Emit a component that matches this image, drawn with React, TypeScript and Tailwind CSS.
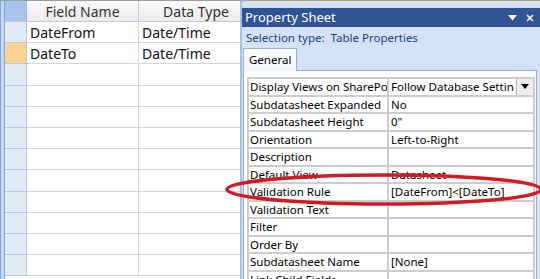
import React from 'react'

const fieldRows = [
  { name: 'DateFrom', type: 'Date/Time' },
  { name: 'DateTo', type: 'Date/Time', current: true },
  ...Array.from({ length: 10 }, () => ({ name: '', type: '' })),
]

const props: [string, string][] = [
  ['Display Views on SharePo', 'Follow Database Settin'],
  ['Subdatasheet Expanded', 'No'],
  ['Subdatasheet Height', '0"'],
  ['Orientation', 'Left-to-Right'],
  ['Description', ''],
  ['Default View', 'Datasheet'],
  ['Validation Rule', '[DateFrom]<[DateTo]'],
  ['Validation Text', ''],
  ['Filter', ''],
  ['Order By', ''],
  ['Subdatasheet Name', '[None]'],
  ['Link Child Fields', ''],
]

function Datasheet() {
  return (
    <div className="w-[240px] h-full shrink-0 flex overflow-hidden bg-white border-t border-[#9c9c9c]">
      {/* blue frame on the left edge */}
      <div className="w-[5px] h-full shrink-0 bg-[#c4d7f0] border-l border-r border-[#88a8d4]" />
      <div className="flex flex-col shrink-0">
        {/* header */}
        <div className="flex h-[21px] shrink-0 border-b border-[#c9c9c9]">
          <div className="w-[22px] bg-[#a9c4ea] border-r border-[#9fb5d6]" />
          <div className="w-[112px] flex items-center justify-center text-[14px] text-[#333] bg-linear-to-b from-[#fbfbfb] to-[#ebebeb] border-r border-[#c9c9c9]">
            Field Name
          </div>
          <div className="w-[114px] flex items-center justify-center text-[14px] text-[#333] bg-linear-to-b from-[#fbfbfb] to-[#ebebeb]">
            Data Type
          </div>
        </div>
        {fieldRows.map((r, i) => (
          <div key={i} className="flex h-[21.2px] shrink-0 text-[14px] text-[#111]">
            <div
              className={`w-[22px] border-r border-b border-[#b7c7de] ${
                r.current ? 'bg-[#fdd38f]' : 'bg-[#e1eaf7]'
              }`}
            />
            <div className="w-[112px] flex items-center pl-[3px] border-r border-b border-[#d6d6d6]">
              {r.name}
            </div>
            <div className="w-[114px] flex items-center pl-[3px] border-b border-[#d6d6d6]">
              {r.type}
            </div>
          </div>
        ))}
      </div>
    </div>
  )
}

function PropertySheet() {
  return (
    <div className="flex-1 h-full flex flex-col bg-[#d3e2f6] border-t border-[#b8a37c] border-l-2 border-l-[#a5c1e8] pt-[7px] overflow-hidden">
      {/* title bar */}
      <div className="h-[19px] shrink-0 flex items-center bg-[#2f5393] text-white pl-[3px] pr-[6px]">
        <span className="text-[13px] leading-none">Property Sheet</span>
        <div className="ml-auto flex items-center gap-[9px]">
          <svg width="9" height="6" viewBox="0 0 9 6">
            <path d="M0 0 H9 L4.5 5.5 Z" fill="white" />
          </svg>
          <svg width="8" height="8" viewBox="0 0 8 8">
            <path d="M1 1 L7 7 M7 1 L1 7" stroke="white" strokeWidth="1.6" />
          </svg>
        </div>
      </div>
      {/* selection type */}
      <div className="h-[21px] shrink-0 flex items-center pl-[4px] text-[11.5px] text-[#1f3f7a]">
        Selection type:&nbsp; Table Properties
      </div>
      {/* tab */}
      <div className="flex shrink-0 pl-[1px]">
        <div className="w-[54px] h-[23px] flex items-center pl-[5px] text-[11.5px] text-black bg-linear-to-b from-white to-[#f1f5fb] border border-b-0 border-[#8db0de] relative z-10 -mb-px">
          General
        </div>
      </div>
      {/* content */}
      <div className="flex-1 ml-[1px] mr-[3px] bg-white border border-[#8db0de] pt-[6px] pl-[3px] pr-[1px]">
        <div className="border-l-2 border-t-2 border-r-2 border-[#cdcdcd] text-[11.5px] text-black">
          {props.map(([label, value], i) => (
            <div key={i} className="flex h-[17.5px] border-b-2 border-[#cdcdcd]">
              <div className="w-[140px] shrink-0 flex items-center pl-[1px] border-r-2 border-[#cdcdcd] whitespace-nowrap overflow-hidden">
                {label}
              </div>
              <div className="flex-1 flex items-center pl-[2px] whitespace-nowrap overflow-hidden">
                <span className="flex-1 overflow-hidden">{value}</span>
                {i === 0 && (
                  <div className="w-[17px] h-full shrink-0 flex items-center justify-center bg-[#eeeeee] border-l border-[#b5b5b5]">
                    <svg width="8" height="5" viewBox="0 0 8 5">
                      <path d="M0 0 H8 L4 5 Z" fill="black" />
                    </svg>
                  </div>
                )}
              </div>
            </div>
          ))}
        </div>
      </div>
    </div>
  )
}

export default function App() {
  return (
    <div className="relative w-[540px] h-[279px] overflow-hidden flex bg-white font-['Noto_Sans',sans-serif]">
      <Datasheet />
      <PropertySheet />
      {/* red hand-drawn ellipse */}
      <svg className="absolute inset-0 pointer-events-none" width="540" height="279">
        <ellipse
          cx="384"
          cy="189.5"
          rx="157"
          ry="14.5"
          fill="none"
          stroke="#d11a22"
          strokeWidth="3.5"
        />
      </svg>
    </div>
  )
}
